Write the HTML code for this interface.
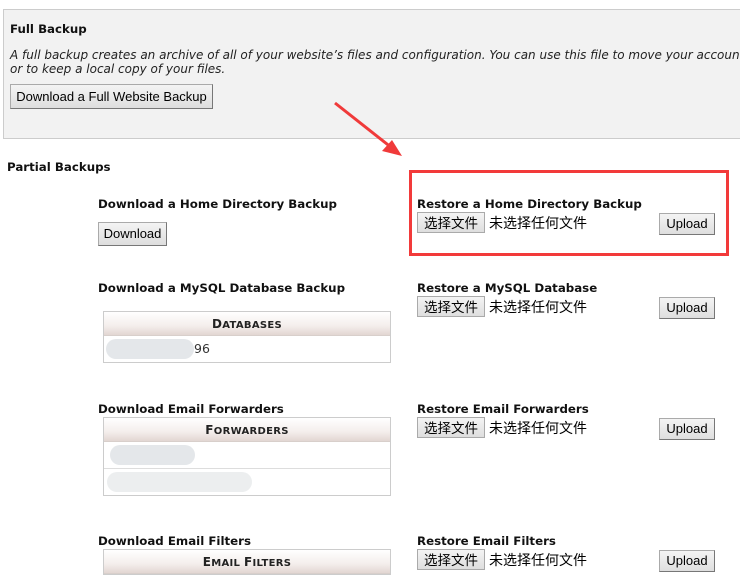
<html><head><style>
body{margin:0;width:740px;height:570px;overflow:hidden;background:#fff;font-family:"DejaVu Sans","Liberation Sans","Noto Sans CJK SC",sans-serif;position:relative;color:#000}
.a{position:absolute;white-space:nowrap}
h{position:absolute;font-weight:bold;font-size:11.8px;white-space:nowrap;color:#111}
.btn{position:absolute;background:linear-gradient(#f4f4f4,#dedede);border:1px solid #aaa;border-right-color:#777;border-bottom-color:#777;font-size:13px;font-family:"Liberation Sans","DejaVu Sans",sans-serif;box-sizing:border-box;text-align:center;white-space:nowrap}
.cf{position:absolute;font-size:14px;font-family:"Noto Sans CJK SC",sans-serif;white-space:nowrap}
.cf span{display:inline-block;background:linear-gradient(#f4f4f4,#dedede);border:1px solid #aaa;padding:0 6px;height:21px;line-height:19px;margin-right:4px;box-sizing:border-box;font-size:13.5px}
.tbl{position:absolute;left:103px;width:288px;border:1px solid #ccc;box-sizing:border-box}
.th{height:23px;background:linear-gradient(#fff,#f4eeec 60%,#e2d6d2);border-bottom:1px solid #d8cfcb;text-align:center;font-weight:bold;font-size:10px;line-height:24px;letter-spacing:.3px;color:#222}
.th b{font-size:12px}
.td{height:26px;border-top:1px solid #ddd;position:relative}
.bl{position:absolute;background:#e4e7ea;border-radius:10px;height:20px;top:3px}
</style></head><body>
<div class="a" style="left:3px;top:9px;width:737px;height:130px;background:#f2f2f2;border:1px solid #ccc;border-right:0;box-sizing:border-box;overflow:hidden">
<h style="left:6px;top:12px">Full Backup</h>
<div class="a" style="left:6px;top:38px;font-size:12px;font-style:italic;line-height:14px;color:#222">A full backup creates an archive of all of your website’s files and configuration. You can use this file to move your account to another server<br>or to keep a local copy of your files.</div>
<div class="btn" style="left:6px;top:74px;width:203px;height:25px;line-height:23px">Download a Full Website Backup</div>
</div>
<h style="left:7px;top:160px">Partial Backups</h>
<svg class="a" style="left:330px;top:98px" width="80" height="65"><line x1="5" y1="5" x2="62" y2="50" stroke="#f03a3a" stroke-width="3"/><polygon points="72,58 52,53 62,42" fill="#f03a3a"/></svg>
<div class="a" style="left:409px;top:170px;width:320px;height:86px;border:3px solid #f23a3a;box-sizing:border-box"></div>

<h style="left:98px;top:197px">Download a Home Directory Backup</h>
<div class="btn" style="left:98px;top:222px;width:69px;height:24px;line-height:22px">Download</div>
<h style="left:417px;top:197px">Restore a Home Directory Backup</h>
<div class="cf" style="left:417px;top:212px"><span>选择文件</span>未选择任何文件</div>
<div class="btn" style="left:659px;top:213px;width:56px;height:22px;line-height:20px">Upload</div>

<h style="left:98px;top:281px">Download a MySQL Database Backup</h>
<div class="tbl" style="top:311px"><div class="th"><b>D</b>ATABASES</div><div class="td" style="border:0"><div class="bl" style="left:2px;width:88px"></div><span class="a" style="left:90px;top:5px;font-size:12.5px;color:#333">96</span></div></div>
<h style="left:417px;top:281px">Restore a MySQL Database</h>
<div class="cf" style="left:417px;top:296px"><span>选择文件</span>未选择任何文件</div>
<div class="btn" style="left:659px;top:297px;width:56px;height:22px;line-height:20px">Upload</div>

<h style="left:98px;top:402px">Download Email Forwarders</h>
<div class="tbl" style="top:417px"><div class="th"><b>F</b>ORWARDERS</div><div class="td" style="border:0"><div class="bl" style="left:6px;width:85px"></div></div><div class="td"><div class="bl" style="left:3px;width:145px;background:#eceeef"></div></div></div>
<h style="left:417px;top:402px">Restore Email Forwarders</h>
<div class="cf" style="left:417px;top:417px"><span>选择文件</span>未选择任何文件</div>
<div class="btn" style="left:659px;top:418px;width:56px;height:22px;line-height:20px">Upload</div>

<h style="left:98px;top:534px">Download Email Filters</h>
<div class="tbl" style="top:549px"><div class="th"><b>E</b>MAIL <b>F</b>ILTERS</div></div>
<h style="left:417px;top:534px">Restore Email Filters</h>
<div class="cf" style="left:417px;top:549px"><span>选择文件</span>未选择任何文件</div>
<div class="btn" style="left:659px;top:550px;width:56px;height:22px;line-height:20px">Upload</div>
</body></html>
